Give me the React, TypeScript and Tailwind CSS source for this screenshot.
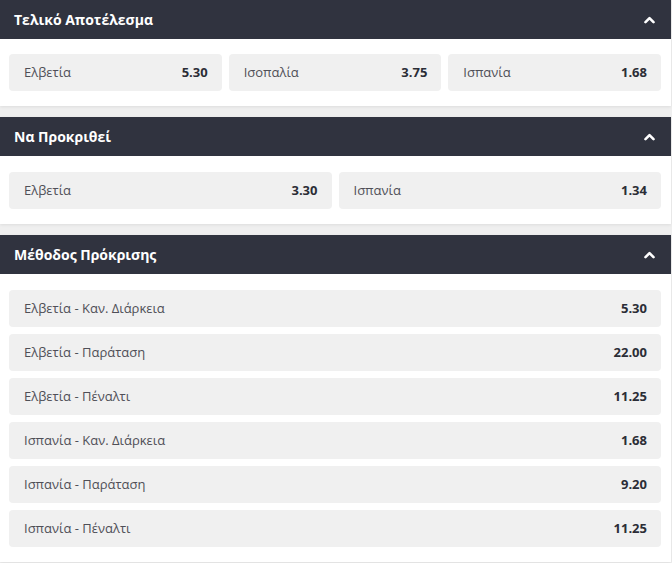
import React from "react";

function Chevron() {
  return (
    <svg width="11" height="8" viewBox="0 0 11 8" className="block">
      <path d="M1.5 6.2 L5.5 2.2 L9.5 6.2" stroke="white" strokeWidth="2.6" fill="none" strokeLinecap="round" strokeLinejoin="round" />
    </svg>
  );
}

function Card({ label, odd }: { label: string; odd: string }) {
  return (
    <div className="flex h-[37px] items-center justify-between rounded-[4px] bg-[#f0f0f0] pl-[15px] pr-[14px]">
      <span className="text-[13px] text-[#4f4f57]">{label}</span>
      <span className="text-[13px] font-bold text-[#2b2d36]">{odd}</span>
    </div>
  );
}

function Section({ title, first, children }: { title: string; first?: boolean; children: React.ReactNode }) {
  return (
    <div className="shadow-[0_1px_3px_rgba(0,0,0,0.08)]">
      <div className="flex h-[39px] items-center justify-between bg-[#30333f] pl-[14px] pr-[16px]">
        <span className="text-[14px] font-bold text-white">{title}</span>
        <Chevron />
      </div>
      <div className={first ? "bg-white pl-[9px] pr-[10px] pt-[15px] pb-[15px]" : "bg-white pl-[9px] pr-[10px] pt-[16px] pb-[15px]"}>{children}</div>
    </div>
  );
}

export default function App() {
  return (
    <div className="h-[563px] w-[672px] overflow-hidden bg-[#efefef]" style={{ fontFamily: "'Open Sans', 'Noto Sans', sans-serif" }}>
      <div className="flex w-[671px] flex-col gap-[11px]">
        <Section title="Τελικό Αποτέλεσμα" first>
          <div className="grid grid-cols-3 gap-[7px]">
            <Card label="Ελβετία" odd="5.30" />
            <Card label="Ισοπαλία" odd="3.75" />
            <Card label="Ισπανία" odd="1.68" />
          </div>
        </Section>
        <Section title="Να Προκριθεί">
          <div className="grid grid-cols-2 gap-[7px]">
            <Card label="Ελβετία" odd="3.30" />
            <Card label="Ισπανία" odd="1.34" />
          </div>
        </Section>
        <Section title="Μέθοδος Πρόκρισης">
          <div className="flex flex-col gap-[7px]">
            <Card label="Ελβετία - Καν. Διάρκεια" odd="5.30" />
            <Card label="Ελβετία - Παράταση" odd="22.00" />
            <Card label="Ελβετία - Πέναλτι" odd="11.25" />
            <Card label="Ισπανία - Καν. Διάρκεια" odd="1.68" />
            <Card label="Ισπανία - Παράταση" odd="9.20" />
            <Card label="Ισπανία - Πέναλτι" odd="11.25" />
          </div>
        </Section>
      </div>
    </div>
  );
}
